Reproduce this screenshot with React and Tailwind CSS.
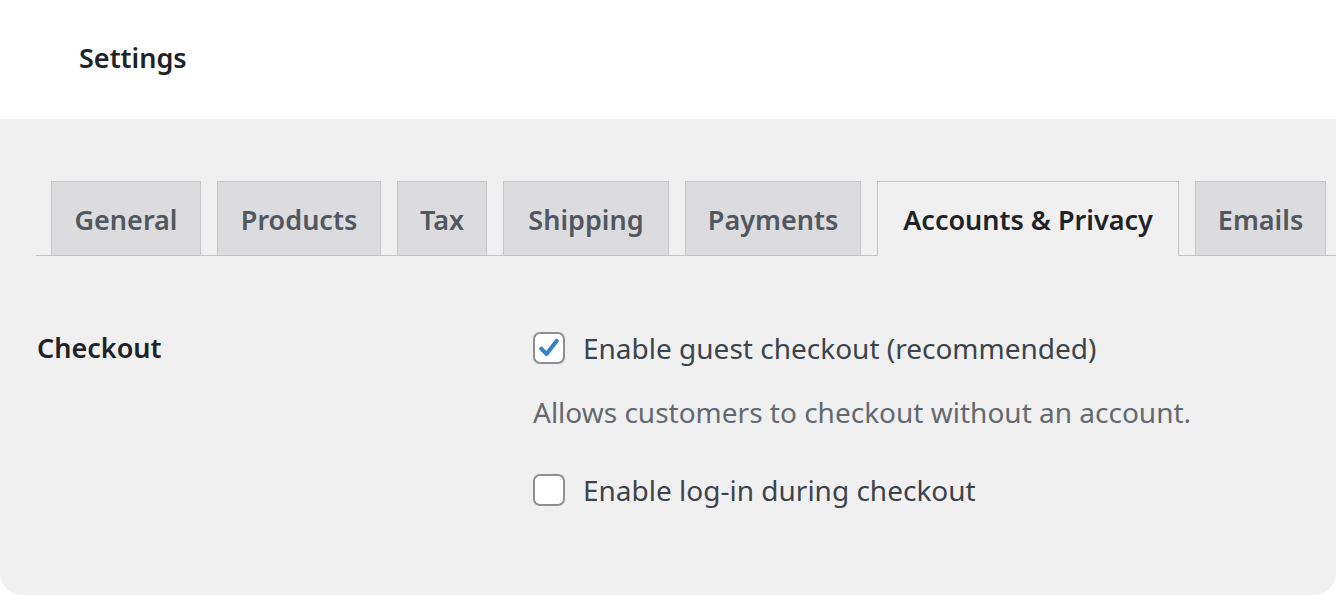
import React from 'react';

const tabs = [
  { label: 'General', w: 'w-[150px]' },
  { label: 'Products', w: 'w-[164px]' },
  { label: 'Tax', w: 'w-[90px]' },
  { label: 'Shipping', w: 'w-[166px]' },
  { label: 'Payments', w: 'w-[176px]' },
  { label: 'Accounts & Privacy', w: 'w-[302px]', active: true },
  { label: 'Emails', w: 'w-[131px]' },
];

const Checkbox = ({ checked }) => (
  <span className="flex h-[32px] w-[32px] shrink-0 items-center justify-center rounded-[7px] border-2 border-[#8c8f94] bg-white">
    {checked && (
      <svg width="24" height="24" viewBox="0 0 20 20">
        <path d="M3.5 10.5 L8 15 L16.5 4" fill="none" stroke="#3582c4" strokeWidth="3.4" strokeLinecap="round" strokeLinejoin="round" />
      </svg>
    )}
  </span>
);

const App = () => {
  return (
    <div className="h-[595px] w-[1336px] overflow-hidden bg-white font-['Segoe_UI','Noto_Sans',sans-serif]">
      <header className="flex h-[119px] items-center pb-[3px] pl-[79px]">
        <h1 className="text-[27px] font-semibold text-[#1d2327]">Settings</h1>
      </header>

      <main className="h-[476px] rounded-b-[22px] bg-[#f0f0f1] pt-[62px]">
        <nav className="ml-[36px] flex gap-[16px] border-b border-[#c3c4c7] pl-[15px]">
          {tabs.map((tab) => (
            <div
              key={tab.label}
              className={`-mb-px flex h-[75px] items-center justify-center border pt-[3px] text-[27px] font-semibold ${tab.w} ${
                tab.active
                  ? 'border-[#c3c4c7] border-b-[#f0f0f1] bg-[#f0f0f1] text-[#1d2327]'
                  : 'border-[#c3c4c7] bg-[#dcdcde] text-[#50575e]'
              }`}
            >
              {tab.label}
            </div>
          ))}
        </nav>

        <section className="flex pl-[37px] pt-[74px]">
          <div className="w-[496px] text-[27px] font-semibold leading-[36px] text-[#1d2327]">Checkout</div>
          <div className="flex flex-col text-[28px] leading-[36px] text-[#3c434a]">
            <label className="flex items-center gap-[18px]">
              <Checkbox checked />
              <span>Enable guest checkout (recommended)</span>
            </label>
            <p className="mt-[28px] text-[#646970]">Allows customers to checkout without an account.</p>
            <label className="mt-[42px] flex items-center gap-[18px]">
              <Checkbox />
              <span>Enable log-in during checkout</span>
            </label>
          </div>
        </section>
      </main>
    </div>
  );
};

export default App;
